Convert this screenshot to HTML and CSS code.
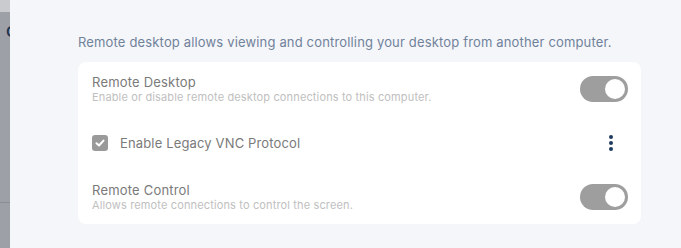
FILE: index.html
```html
<!DOCTYPE html>
<html>
<head>
    <title>Remote Desktop</title>
    <link rel="stylesheet" href="styles.css">
</head>
<body>
    <div class="page">
        <div class="backdrop">
            <div class="backdrop-top"></div>
            <span class="backdrop-char">C</span>
            <div class="backdrop-line"></div>
        </div>

        <div class="drawer">
            <p class="intro">Remote desktop allows viewing and controlling your desktop from another computer.</p>

            <div class="card">
                <div class="row">
                    <div class="text">
                        <div class="title">Remote Desktop</div>
                        <div class="subtitle">Enable or disable remote desktop connections to this computer.</div>
                    </div>
                    <span class="toggle on"><span class="knob"></span></span>
                </div>

                <div class="row">
                    <label class="check">
                        <span class="box">
                            <svg width="12" height="12" viewBox="0 0 12 12"><path d="M2.5 6.2 L5 8.5 L9.5 3.6" fill="none" stroke="#fff" stroke-width="2" stroke-linecap="round" stroke-linejoin="round"/></svg>
                        </span>
                        <span class="check-label">Enable Legacy VNC Protocol</span>
                    </label>
                    <span class="kebab">
                        <svg width="6" height="18" viewBox="0 0 6 18"><circle cx="3" cy="3" r="2"/><circle cx="3" cy="9" r="2"/><circle cx="3" cy="15" r="2"/></svg>
                    </span>
                </div>

                <div class="row">
                    <div class="text">
                        <div class="title">Remote Control</div>
                        <div class="subtitle">Allows remote connections to control the screen.</div>
                    </div>
                    <span class="toggle on"><span class="knob"></span></span>
                </div>
            </div>
        </div>
    </div>
</body>
</html>
```

FILE: styles.css
```css
html, body {
    margin: 0;
    padding: 0;
    height: 100%;
}

body {
    font-family: Inter, 'Noto Sans', sans-serif;
    background: #f5f6fa;
}

.page {
    display: flex;
    height: 248px;
}

.backdrop {
    position: relative;
    width: 10px;
    flex: none;
    background: #9da1a7;
    overflow: hidden;
}

.backdrop-top {
    height: 12px;
    background: #c9cbce;
}

.backdrop-char {
    position: absolute;
    left: 6px;
    top: 22px;
    font-size: 15px;
    font-weight: 600;
    color: #1f3350;
}

.backdrop-line {
    position: absolute;
    left: 0;
    right: 0;
    top: 202px;
    height: 1px;
    background: #8a8e94;
}

.drawer {
    flex: 1;
    padding: 33px 40px 0 68px;
    background: #f5f6fa;
}

.intro {
    margin: 0 0 11px;
    font-size: 13px;
    line-height: 18px;
    letter-spacing: 0.16px;
    color: #70829a;
}

.card {
    background: #ffffff;
    border-radius: 8px;
    padding: 0 13px 0 14px;
}

.row {
    display: flex;
    align-items: center;
    justify-content: space-between;
    padding: 12px 0;
}

.title {
    font-size: 13px;
    line-height: 16px;
    letter-spacing: 0.2px;
    color: #7a7a7a;
}

.subtitle {
    font-size: 11px;
    line-height: 14px;
    letter-spacing: 0.14px;
    color: #c0c0c0;
}

.toggle {
    display: flex;
    align-items: center;
    justify-content: flex-end;
    width: 48px;
    height: 26px;
    padding: 0 3px;
    box-sizing: border-box;
    border-radius: 13px;
    background: #9e9e9e;
}

.knob {
    width: 20px;
    height: 20px;
    border-radius: 50%;
    background: #ffffff;
}

.check {
    display: flex;
    align-items: center;
    gap: 12px;
    height: 30px;
}

.box {
    display: flex;
    align-items: center;
    justify-content: center;
    width: 16px;
    height: 16px;
    border-radius: 3px;
    background: #9a9a9a;
}

.check-label {
    font-size: 13px;
    letter-spacing: 0.15px;
    color: #7a7a7a;
}

.kebab {
    display: flex;
    align-items: center;
    justify-content: center;
    width: 30px;
    height: 30px;
    margin-right: 2px;
    fill: #1d3b5e;
}
```
